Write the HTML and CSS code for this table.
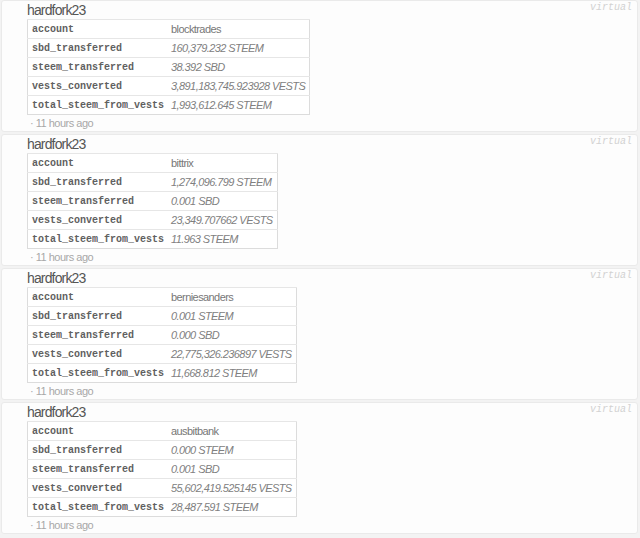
FILE: index.html
```html
<!DOCTYPE html>
<html>
<head>
<meta charset="utf-8">
<link rel="stylesheet" href="styles.css">
</head>
<body>
<div class="feed">
  <div class="card">
    <span class="tag">virtual</span>
    <div class="title">hardfork23</div>
    <table class="ops">
      <tr><td class="k">account</td><td class="v acct">blocktrades</td></tr>
      <tr><td class="k">sbd_transferred</td><td class="v">160,379.232 STEEM</td></tr>
      <tr><td class="k">steem_transferred</td><td class="v">38.392 SBD</td></tr>
      <tr><td class="k">vests_converted</td><td class="v">3,891,183,745.923928 VESTS</td></tr>
      <tr><td class="k">total_steem_from_vests</td><td class="v">1,993,612.645 STEEM</td></tr>
    </table>
    <div class="time">· 11 hours ago</div>
  </div>
  <div class="card">
    <span class="tag">virtual</span>
    <div class="title">hardfork23</div>
    <table class="ops">
      <tr><td class="k">account</td><td class="v acct">bittrix</td></tr>
      <tr><td class="k">sbd_transferred</td><td class="v">1,274,096.799 STEEM</td></tr>
      <tr><td class="k">steem_transferred</td><td class="v">0.001 SBD</td></tr>
      <tr><td class="k">vests_converted</td><td class="v">23,349.707662 VESTS</td></tr>
      <tr><td class="k">total_steem_from_vests</td><td class="v">11.963 STEEM</td></tr>
    </table>
    <div class="time">· 11 hours ago</div>
  </div>
  <div class="card">
    <span class="tag">virtual</span>
    <div class="title">hardfork23</div>
    <table class="ops">
      <tr><td class="k">account</td><td class="v acct">berniesanders</td></tr>
      <tr><td class="k">sbd_transferred</td><td class="v">0.001 STEEM</td></tr>
      <tr><td class="k">steem_transferred</td><td class="v">0.000 SBD</td></tr>
      <tr><td class="k">vests_converted</td><td class="v">22,775,326.236897 VESTS</td></tr>
      <tr><td class="k">total_steem_from_vests</td><td class="v">11,668.812 STEEM</td></tr>
    </table>
    <div class="time">· 11 hours ago</div>
  </div>
  <div class="card">
    <span class="tag">virtual</span>
    <div class="title">hardfork23</div>
    <table class="ops">
      <tr><td class="k">account</td><td class="v acct">ausbitbank</td></tr>
      <tr><td class="k">sbd_transferred</td><td class="v">0.000 STEEM</td></tr>
      <tr><td class="k">steem_transferred</td><td class="v">0.001 SBD</td></tr>
      <tr><td class="k">vests_converted</td><td class="v">55,602,419.525145 VESTS</td></tr>
      <tr><td class="k">total_steem_from_vests</td><td class="v">28,487.591 STEEM</td></tr>
    </table>
    <div class="time">· 11 hours ago</div>
  </div>
</div>
</body>
</html>
```
FILE: styles.css
```css
html, body {
  margin: 0;
  padding: 0;
  background: #f3f3f3;
  font-family: "Liberation Sans", Arial, sans-serif;
}
.feed {
  display: flex;
  flex-direction: column;
  gap: 2px;
  padding: 0 2px 0 1px;
}
.card {
  position: relative;
  background: #fdfdfd;
  border: 1px solid #eaeaea;
  border-radius: 3px;
  padding: 0 0 0 25px;
}
.tag {
  position: absolute;
  top: 1px;
  right: 5px;
  font-family: "Liberation Mono", monospace;
  font-style: italic;
  font-size: 10px;
  line-height: 12px;
  color: #d2d2d2;
}
.title {
  font-size: 14px;
  line-height: 18px;
  letter-spacing: -0.85px;
  color: #555;
}
.ops {
  border-collapse: collapse;
  border: 1px solid #dcdcdc;
  background: #fff;
}
.ops td {
  padding: 3px 4px;
  height: 12px;
  line-height: 12px;
  border-top: 1px solid #e6e6e6;
  white-space: nowrap;
  vertical-align: middle;
}
.ops td.k {
  font-family: "Liberation Mono", monospace;
  font-weight: bold;
  font-size: 10px;
  color: #606060;
  padding: 4px 3px 2px 4px;
}
.v {
  font-size: 11px;
  font-style: italic;
  letter-spacing: -0.58px;
  color: #808080;
}
.v.acct {
  font-style: normal;
  color: #777;
}
.time {
  font-size: 11px;
  line-height: 16px;
  letter-spacing: -0.5px;
  color: #a8a8a8;
  padding-left: 3px;
}
```
